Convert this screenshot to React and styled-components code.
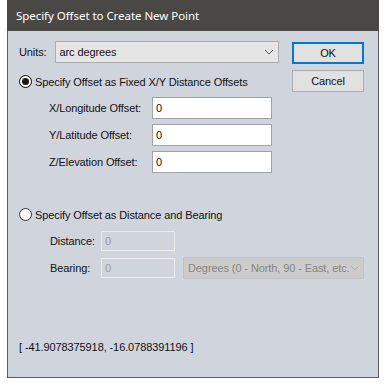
import React from 'react';
import styled, { createGlobalStyle } from 'styled-components';

const Global = createGlobalStyle`
  html, body {
    margin: 0;
    background: #ffffff;
  }
  body {
    font-family: "Liberation Sans", Arial, sans-serif;
    font-size: 11px;
    letter-spacing: -0.1px;
    color: #111;
  }
`;

const Window = styled.div`
  margin-left: 7px;
  width: 372px;
  height: 378px;
  box-sizing: border-box;
  border: 1px solid #5c5c5c;
  border-top: none;
  background: #d0d5dd;
  display: flex;
  flex-direction: column;
`;

const TitleBar = styled.div`
  height: 31px;
  margin: 0 -1px;
  background: #4a4845;
  color: #ffffff;
  font-family: "Noto Sans", "Open Sans", sans-serif;
  font-size: 11.5px;
  letter-spacing: -0.05px;
  display: flex;
  align-items: center;
  padding-left: 9px;
  flex-shrink: 0;
`;

const Body = styled.div`
  flex: 1;
  padding: 10px 14px 0 11px;
  display: flex;
  flex-direction: column;
`;

const Top = styled.div`
  display: flex;
  justify-content: space-between;
`;

const LeftCol = styled.div`
  display: flex;
  flex-direction: column;
`;

const UnitsRow = styled.div`
  display: flex;
  align-items: center;
  gap: 8px;
`;

const Select = styled.div`
  box-sizing: border-box;
  width: ${p => p.$w}px;
  height: ${p => p.$h}px;
  border: 1px solid ${p => (p.$disabled ? '#c2c2c2' : '#adadad')};
  background: ${p => (p.$disabled ? '#cccccc' : '#e5e5e5')};
  color: ${p => (p.$disabled ? '#858585' : '#111')};
  display: flex;
  align-items: center;
  justify-content: space-between;
  padding: 0 4px;
  white-space: nowrap;
  overflow: hidden;
`;

const ButtonCol = styled.div`
  display: flex;
  flex-direction: column;
  gap: 6px;
  padding-top: 1px;
`;

const Button = styled.div`
  box-sizing: border-box;
  width: 72px;
  height: 22px;
  border: ${p => (p.$primary ? '2px solid #0078d7' : '1px solid #adadad')};
  background: #e1e1e1;
  display: flex;
  align-items: center;
  justify-content: center;
`;

const RadioRow = styled.label`
  display: flex;
  align-items: center;
  gap: 3px;
  margin-top: ${p => p.$mt}px;
  white-space: nowrap;
`;

const RadioDot = styled.span`
  box-sizing: border-box;
  width: 13px;
  height: 13px;
  border-radius: 50%;
  border: 1px solid ${p => (p.$checked ? '#000' : '#333')};
  background: #fff;
  display: flex;
  align-items: center;
  justify-content: center;
  &::after {
    content: '';
    display: ${p => (p.$checked ? 'block' : 'none')};
    width: 7px;
    height: 7px;
    border-radius: 50%;
    background: #1a1a1a;
  }
`;

const Fields = styled.div`
  display: grid;
  grid-template-columns: 103px 120px;
  row-gap: 5px;
  padding-left: 30px;
  margin-top: 5px;
  align-items: center;
`;

const Label = styled.span`
  white-space: nowrap;
`;

const Input = styled.div`
  box-sizing: border-box;
  height: ${p => p.$h}px;
  width: ${p => p.$w}px;
  border: 1px solid ${p => (p.$disabled ? '#ececec' : '#a3a3a3')};
  background: ${p => (p.$disabled ? 'transparent' : '#ffffff')};
  color: ${p => (p.$disabled ? '#999999' : '#111')};
  display: flex;
  align-items: center;
  padding-left: 3px;
`;

const BearingGrid = styled.div`
  display: grid;
  grid-template-columns: 51px 82px auto;
  row-gap: 6px;
  padding-left: 31px;
  margin-top: 10px;
  align-items: center;
`;

const Coords = styled.div`
  margin-top: auto;
  margin-bottom: 24px;
`;

const Chevron = ({ color }) => (
  <svg width="10" height="6" viewBox="0 0 10 6">
    <polyline points="1,1 5,5 9,1" fill="none" stroke={color} strokeWidth="1" />
  </svg>
);

export default function App() {
  return (
    <>
      <Global />
      <Window>
        <TitleBar>Specify Offset to Create New Point</TitleBar>
        <Body>
          <Top>
            <LeftCol>
              <UnitsRow>
                <Label>Units:</Label>
                <Select $w={224} $h={22}>
                  <span>arc degrees</span>
                  <Chevron color="#5a5a5a" />
                </Select>
              </UnitsRow>
              <RadioRow $mt={12}>
                <RadioDot $checked />
                <span>Specify Offset as Fixed X/Y Distance Offsets</span>
              </RadioRow>
            </LeftCol>
            <ButtonCol>
              <Button $primary>OK</Button>
              <Button>Cancel</Button>
            </ButtonCol>
          </Top>
          <Fields>
            <Label>X/Longitude Offset:</Label>
            <Input $w={120} $h={22}>0</Input>
            <Label>Y/Latitude Offset:</Label>
            <Input $w={120} $h={22}>0</Input>
            <Label>Z/Elevation Offset:</Label>
            <Input $w={120} $h={22}>0</Input>
          </Fields>
          <RadioRow $mt={35}>
            <RadioDot />
            <span>Specify Offset as Distance and Bearing</span>
          </RadioRow>
          <BearingGrid>
            <Label>Distance:</Label>
            <Input $w={74} $h={20} $disabled>0</Input>
            <span />
            <Label>Bearing:</Label>
            <Input $w={74} $h={20} $disabled>0</Input>
            <Select $w={181} $h={22} $disabled>
              <span>Degrees (0 - North, 90 - East, etc.</span>
              <Chevron color="#a8a8a8" />
            </Select>
          </BearingGrid>
          <Coords>[ -41.9078375918, -16.0788391196 ]</Coords>
        </Body>
      </Window>
    </>
  );
}
